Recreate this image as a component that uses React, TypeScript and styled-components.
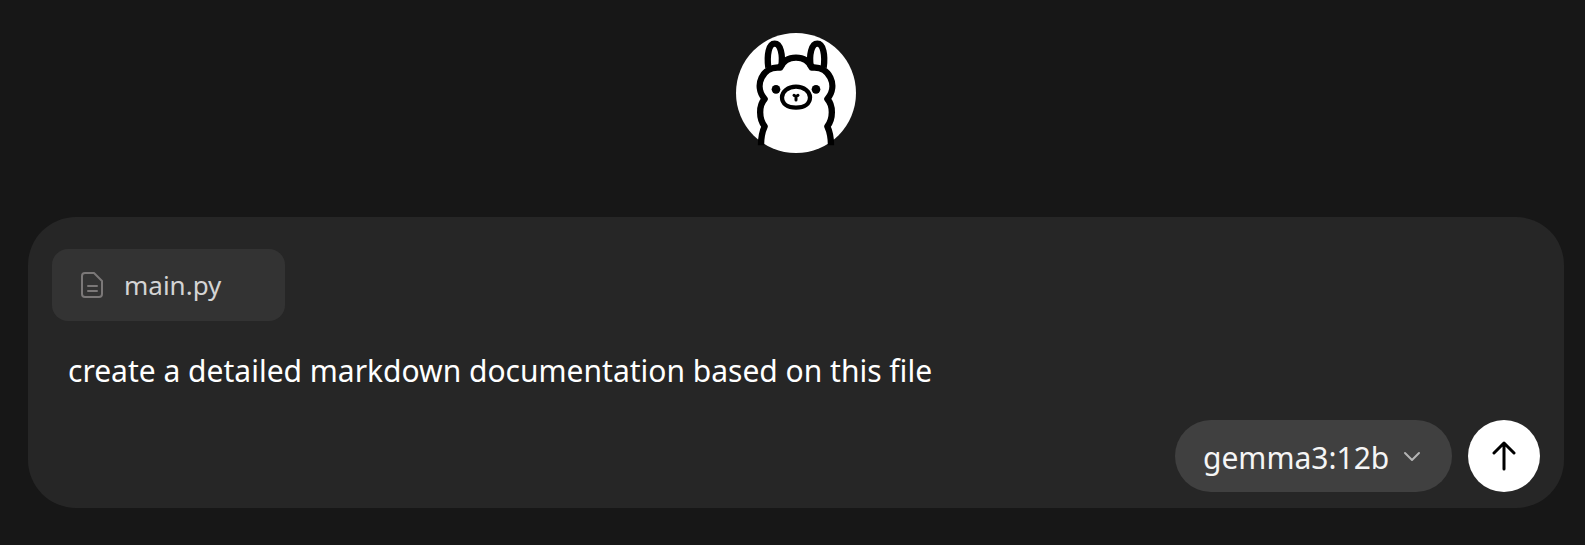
import { useState } from "react";
import styled, { createGlobalStyle } from "styled-components";

const GlobalStyle = createGlobalStyle`
  * { box-sizing: border-box; }
  body {
    margin: 0;
    background: #171717;
    color: #ffffff;
    font-family: "Segoe UI", "Noto Sans", sans-serif;
  }
`;

const Page = styled.main`
  display: flex;
  flex-direction: column;
  align-items: center;
  gap: 64px;
  padding: 33px 21px 36px 28px;
`;

const Logo = styled.svg`
  display: block;
  width: 120px;
  height: 120px;
  overflow: visible;
`;

const Composer = styled.form`
  width: 100%;
  display: flex;
  flex-direction: column;
  align-items: flex-start;
  padding: 32px 24px 16px;
  border-radius: 48px;
  background: #262626;
`;

const FileChip = styled.div`
  display: flex;
  align-items: center;
  gap: 20px;
  height: 72px;
  padding: 0 64px 0 28px;
  border-radius: 16px;
  background: #333333;
  color: #d4d4d4;
  font-size: 26px;
  line-height: 40px;
`;

const FileIcon = styled.svg`
  width: 24px;
  height: 28px;
  fill: none;
  stroke: #7b7878;
  stroke-width: 2;
  stroke-linecap: round;
  stroke-linejoin: round;
`;

const Prompt = styled.textarea`
  display: block;
  width: 100%;
  height: 48px;
  margin: 26px 0 25px;
  padding: 0 16px;
  border: 0;
  outline: 0;
  resize: none;
  overflow: hidden;
  background: transparent;
  color: #ffffff;
  font-family: inherit;
  font-size: 30px;
  line-height: 48px;
`;

const Actions = styled.div`
  display: flex;
  gap: 16px;
  align-self: flex-end;
`;

const ModelPicker = styled.div`
  position: relative;
  display: flex;
`;

const ModelSelect = styled.select`
  appearance: none;
  height: 72px;
  padding: 2px 62px 0 28px;
  border: 0;
  border-radius: 36px;
  background: #404040;
  color: #f5f5f5;
  font-family: inherit;
  font-size: 30px;
  cursor: pointer;
`;

const Chevron = styled.svg`
  position: absolute;
  right: 31px;
  top: 31px;
  width: 18px;
  height: 12px;
  fill: none;
  stroke: #b4b4b4;
  stroke-width: 2;
  stroke-linecap: round;
  stroke-linejoin: round;
  pointer-events: none;
`;

const SendButton = styled.button`
  display: flex;
  align-items: center;
  justify-content: center;
  width: 72px;
  height: 72px;
  padding: 0;
  border: 0;
  border-radius: 50%;
  background: #ffffff;
  cursor: pointer;
`;

const Arrow = styled.svg`
  width: 24px;
  height: 30px;
  fill: none;
  stroke: #000000;
  stroke-width: 3;
  stroke-linecap: round;
  stroke-linejoin: round;
`;

function LlamaLogo() {
  return (
    <Logo viewBox="0 0 360 360" role="img" aria-label="Ollama">
      <circle cx="180" cy="180" r="180" fill="#fff" />
      <g fill="none" stroke="#000" strokeWidth="19" strokeLinejoin="round">
        <path d="M97 104C92 66 98 32 116 32S141 66 136 99" />
        <path d="M263 104C268 66 262 32 244 32S219 66 224 99" />
        <path d="M75 337C75 315 78 297 86 280C68 257 68 217 86 198C52 158 80 98 133 104C142 82 161 74 180 74S218 82 227 104C280 98 308 158 274 198C292 217 292 257 274 280C282 297 285 315 285 337" />
      </g>
      <circle cx="120" cy="169" r="13" />
      <circle cx="240" cy="169" r="13" />
      <path
        d="M180 161C156 161 138 176 138 193C138 212 154 224 180 224S222 212 222 193C222 176 204 161 180 161Z"
        fill="none"
        stroke="#000"
        strokeWidth="13"
      />
      <path
        d="M174 187L180 191L186 187M180 191V201"
        fill="none"
        stroke="#000"
        strokeWidth="9"
        strokeLinecap="round"
        strokeLinejoin="round"
      />
    </Logo>
  );
}

export default function App() {
  const [prompt, setPrompt] = useState(
    "create a detailed markdown documentation based on this file"
  );

  return (
    <>
      <GlobalStyle />
      <Page>
        <LlamaLogo />
        <Composer onSubmit={(event) => event.preventDefault()}>
          <FileChip>
            <FileIcon viewBox="0 0 24 28" aria-hidden="true">
              <path d="M5 2H14L22 10V23Q22 26 19 26H5Q2 26 2 23V5Q2 2 5 2ZM8 15H17M8 20H17" />
            </FileIcon>
            <span>main.py</span>
          </FileChip>
          <Prompt
            aria-label="Message"
            rows={1}
            spellCheck={false}
            value={prompt}
            onChange={(event) => setPrompt(event.target.value)}
          />
          <Actions>
            <ModelPicker>
              <ModelSelect aria-label="Model" defaultValue="gemma3:12b">
                <option>gemma3:12b</option>
              </ModelSelect>
              <Chevron viewBox="0 0 18 12" aria-hidden="true">
                <path d="M2 2L9 9L16 2" />
              </Chevron>
            </ModelPicker>
            <SendButton type="submit" aria-label="Send message">
              <Arrow viewBox="0 0 24 30" aria-hidden="true">
                <path d="M12 28V2M2 12L12 2L22 12" />
              </Arrow>
            </SendButton>
          </Actions>
        </Composer>
      </Page>
    </>
  );
}
